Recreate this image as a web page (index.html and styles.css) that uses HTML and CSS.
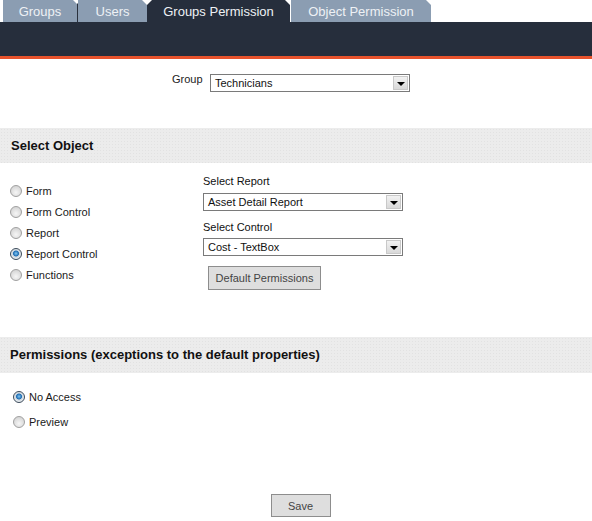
FILE: index.html
```html
<!DOCTYPE html>
<html>
<head>
<meta charset="utf-8">
<link rel="stylesheet" href="styles.css">
</head>
<body>
<div class="tabs">
  <div class="tab tab-groups">Groups</div>
  <div class="tab tab-users">Users</div>
  <div class="tab tab-active">Groups Permission</div>
  <div class="tab tab-object">Object Permission</div>
</div>
<div class="bar"></div>

<div class="group-row">
  <span class="group-label">Group</span>
  <div class="select sel-group"><span class="sel-text">Technicians</span><span class="sel-btn"><span class="arrow"></span></span></div>
</div>

<div class="band band-1">Select Object</div>

<div class="object">
  <div class="radios">
    <div class="radio-row"><span class="radio"></span>Form</div>
    <div class="radio-row"><span class="radio"></span>Form Control</div>
    <div class="radio-row"><span class="radio"></span>Report</div>
    <div class="radio-row"><span class="radio checked"></span>Report Control</div>
    <div class="radio-row"><span class="radio"></span>Functions</div>
  </div>
  <div class="selects">
    <div class="field-label">Select Report</div>
    <div class="select sel-wide sel-1"><span class="sel-text">Asset Detail Report</span><span class="sel-btn"><span class="arrow"></span></span></div>
    <div class="field-label lbl-2">Select Control</div>
    <div class="select sel-wide sel-2"><span class="sel-text">Cost - TextBox</span><span class="sel-btn"><span class="arrow"></span></span></div>
    <div class="btn btn-default">Default Permissions</div>
  </div>
</div>

<div class="band band-2">Permissions (exceptions to the default properties)</div>

<div class="perms">
  <div class="radio-row perm-row"><span class="radio checked"></span>No Access</div>
  <div class="radio-row perm-row"><span class="radio"></span>Preview</div>
</div>

<div class="save-row"><div class="btn btn-save">Save</div></div>
</body>
</html>
```
FILE: styles.css
```css
html, body {
  margin: 0;
  padding: 0;
  background: #ffffff;
  font-family: "Liberation Sans", Arial, sans-serif;
  color: #1a1a1a;
}
body {
  width: 592px;
  height: 521px;
  overflow: hidden;
}
.tabs {
  display: flex;
  height: 22px;
  padding-left: 3px;
}
.tab {
  height: 22px;
  box-sizing: border-box;
  font-size: 13px;
  line-height: 23px;
  color: #eef1f5;
  text-align: center;
  clip-path: polygon(0 0, calc(100% - 5px) 0, 100% 5px, 100% 100%, 0 100%);
  background: #8b9db2;
}
.tab-groups {
  width: 75px;
  border-right: 1px solid #2a313d;
  clip-path: none;
  position: relative;
}
.tab-groups::after {
  content: "";
  position: absolute;
  right: -4px;
  top: 0;
  border-top: 4px solid #fff;
  border-left: 4px solid transparent;
  border-right: 4px solid transparent;
}
.tab-users {
  width: 69px;
}
.tab-active {
  width: 143px;
  background: #262e3c;
  clip-path: polygon(5px 0, calc(100% - 5px) 0, 100% 5px, 100% 100%, 0 100%, 0 5px);
}
.tab-object {
  width: 140px;
  margin-left: 1px;
}
.bar {
  height: 34px;
  background: #262e3c;
  border-bottom: 3px solid #e8532d;
}
.group-row {
  display: flex;
  align-items: flex-start;
  padding: 15px 0 0 172px;
  height: 21px;
}
.group-label {
  font-size: 11px;
  line-height: 11px;
  width: 38px;
  color: #222;
}
.select {
  display: flex;
  height: 18px;
  box-sizing: border-box;
  border: 1px solid #7a7a7a;
  background: #fff;
  align-items: center;
}
.sel-group,
.sel-wide {
  width: 200px;
}
.sel-text {
  flex: 1;
  font-size: 11px;
  padding-left: 4px;
  color: #111;
}
.sel-btn {
  width: 15px;
  height: 14px;
  margin-right: 1px;
  background: linear-gradient(#f2f2f2, #d9d9d9);
  border: 1px solid #c9c9c9;
  box-sizing: border-box;
  display: flex;
  align-items: center;
  justify-content: center;
}
.arrow {
  width: 0;
  height: 0;
  border-left: 4px solid transparent;
  border-right: 4px solid transparent;
  border-top: 4px solid #000;
  margin-top: 2px;
}
.band {
  height: 35px;
  background-color: #ececec;
  background-image: radial-gradient(#e2e2e2 0.6px, transparent 0.7px);
  background-size: 3px 3px;
  font-size: 13px;
  font-weight: bold;
  line-height: 36px;
  color: #111;
}
.band-1 {
  margin-top: 33px;
  padding-left: 11px;
}
.object {
  display: flex;
  height: 174px;
}
.radios {
  width: 193px;
  padding: 17px 0 0 10px;
}
.radio-row {
  display: flex;
  align-items: center;
  height: 21px;
  font-size: 11px;
  color: #1a1a1a;
}
.radio {
  width: 12px;
  height: 12px;
  box-sizing: border-box;
  border-radius: 50%;
  border: 1px solid #a0a0a0;
  background: radial-gradient(circle at 50% 65%, #f6f6f6 0, #d6d6d6 75%);
  margin-right: 4px;
}
.radio.checked {
  border-color: #3b4a5a;
  background: radial-gradient(circle at 50% 45%, #80c6f2 0, #1f6db3 2.6px, #c9d4de 3.3px, #e9edf0 5px);
}
.selects {
  padding-top: 12px;
}
.field-label {
  font-size: 11px;
  height: 13px;
  line-height: 13px;
  color: #111;
}
.sel-1 {
  margin-top: 5px;
}
.lbl-2 {
  margin-top: 10px;
}
.sel-2 {
  margin-top: 4px;
}
.btn {
  display: flex;
  align-items: center;
  justify-content: center;
  box-sizing: border-box;
  border: 1px solid #8d8d8d;
  background: #dedede;
  font-size: 11px;
  color: #444;
}
.btn-default {
  width: 113px;
  height: 24px;
  margin: 10px 0 0 5px;
}
.band-2 {
  height: 36px;
  padding-left: 10px;
}
.perms {
  padding: 11px 0 0 13px;
  height: 110px;
}
.perm-row {
  height: 25px;
}
.save-row {
  display: flex;
  justify-content: center;
  padding-left: 9px;
}
.btn-save {
  width: 60px;
  height: 23px;
}
```
